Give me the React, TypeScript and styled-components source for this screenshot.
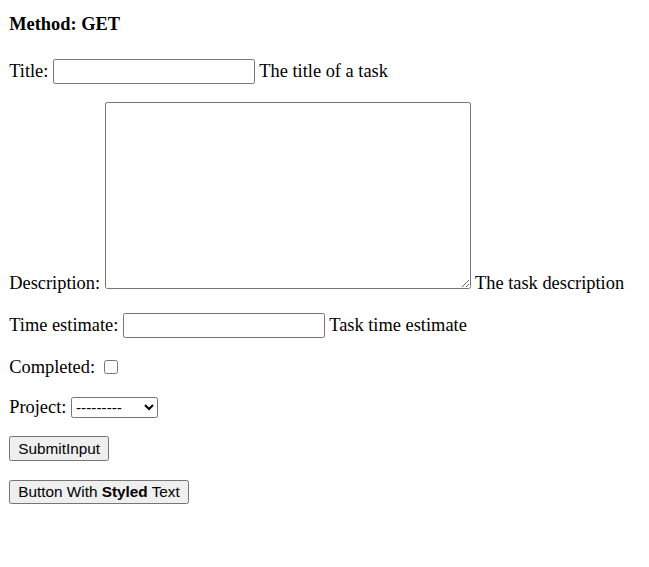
import React from 'react';
import styled, { createGlobalStyle } from 'styled-components';

const GlobalStyle = createGlobalStyle`
  html, body { background: #ffffff; }
  body {
    margin: 0;
    padding: 13.5px 9.2px 0;
    font-family: "Liberation Serif", "Times New Roman", serif;
    font-size: 18.4px;
    color: #000000;
  }
`;

const Heading = styled.h4`
  margin: 0 0 24.5px;
  font-size: 18.4px;
  font-weight: bold;
`;

const Form = styled.form`
  margin: 0;
`;

const Field = styled.p`
  margin: 0 0 18.4px;
`;

const controlFont = `
  font-family: "Liberation Sans", Arial, sans-serif;
  font-size: 15.33px;
  color: #000000;
`;

const TextInput = styled.input`
  ${controlFont}
  box-sizing: border-box;
  width: 202px;
  height: 25px;
  margin: 0;
  padding: 1px 2px;
  border: 1px solid #767676;
  border-radius: 2.3px;
  background: #ffffff;
  vertical-align: baseline;
`;

const TextArea = styled.textarea`
  ${controlFont}
  box-sizing: border-box;
  width: 366px;
  height: 187px;
  margin: 0;
  padding: 2px;
  border: 1px solid #767676;
  border-radius: 2.3px;
  background: #ffffff;
  resize: both;
`;

const CheckBox = styled.input`
  width: 14px;
  height: 14px;
  margin: 3.45px 3.45px 3.45px 4.6px;
  vertical-align: baseline;
`;

const Select = styled.select`
  ${controlFont}
  box-sizing: border-box;
  width: 87px;
  height: 21px;
  margin: 0;
  border: 1px solid #767676;
  border-radius: 2.3px;
  background: #ffffff;
`;

const Button = styled.button<{ $tall?: boolean }>`
  ${controlFont}
  box-sizing: border-box;
  height: ${(p) => (p.$tall ? '25px' : '24.4px')};
  margin: 0;
  padding: 1px 8px;
  border: 1px solid #767676;
  border-radius: 2.3px;
  background: #efefef;
`;

export default function App() {
  return (
    <>
      <GlobalStyle />
      <Heading>Method: GET</Heading>
      <Form onSubmit={(e) => e.preventDefault()}>
        <Field>
          Title: <TextInput type="text" name="title" /> The title of a task
        </Field>
        <Field>
          Description: <TextArea name="description" /> The task description
        </Field>
        <Field>
          Time estimate: <TextInput type="text" name="time_estimate" /> Task time estimate
        </Field>
        <Field>
          Completed: <CheckBox type="checkbox" name="completed" />
        </Field>
        <Field>
          Project: <Select name="project" defaultValue="">
            <option value="">---------</option>
          </Select>
        </Field>
        <Field>
          <Button type="submit" $tall>SubmitInput</Button>
        </Field>
        <Field>
          <Button type="button">
            Button With <b>Styled</b> Text
          </Button>
        </Field>
      </Form>
    </>
  );
}
